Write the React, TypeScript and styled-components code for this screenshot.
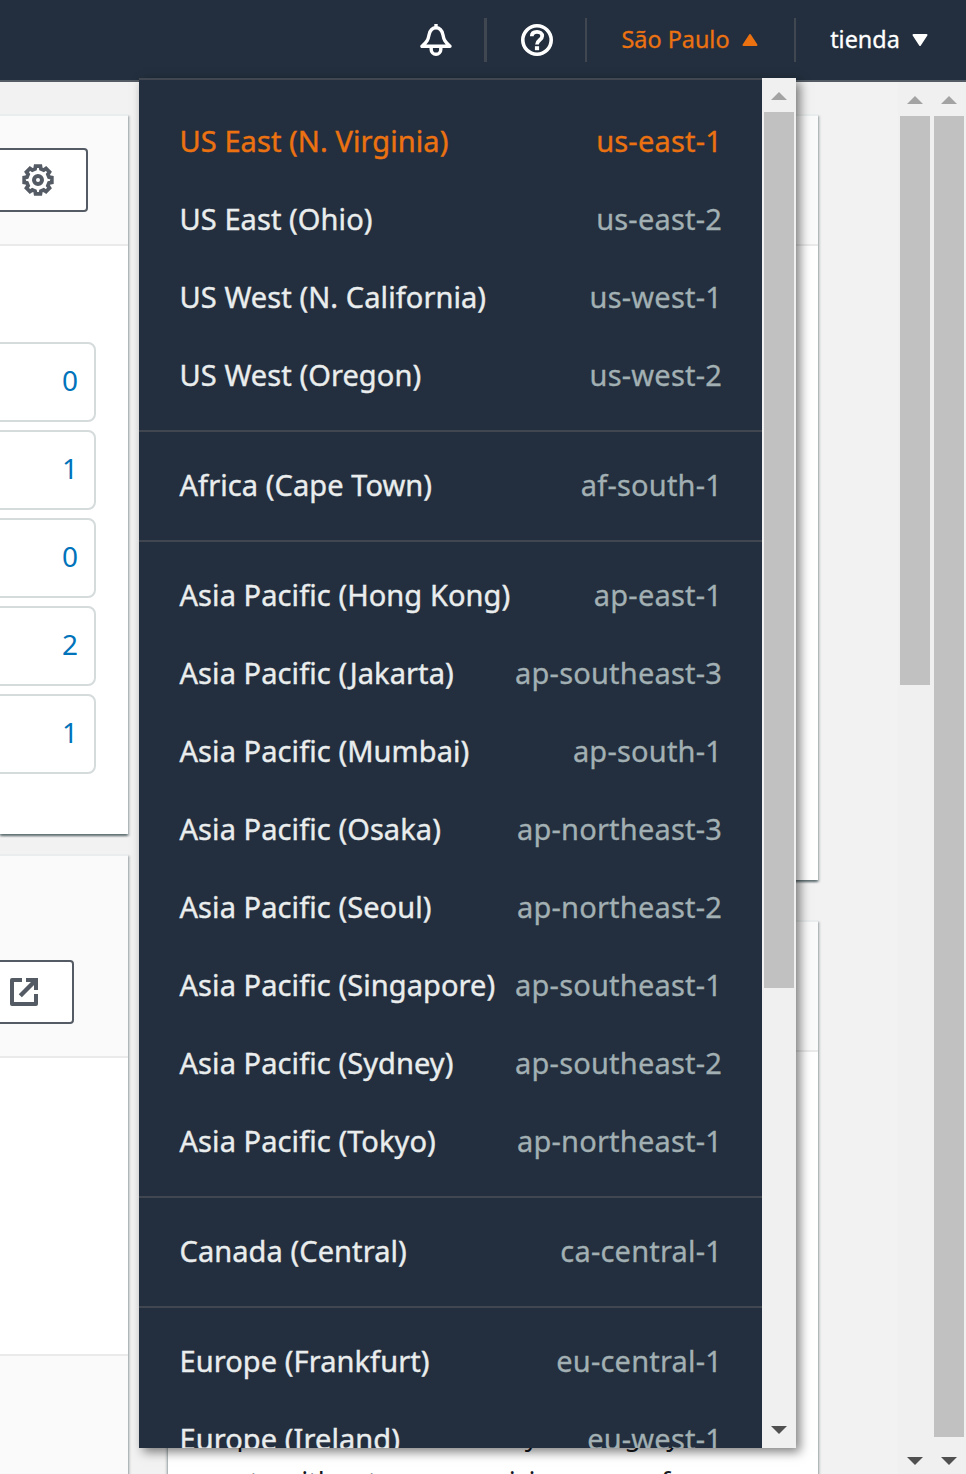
import React from 'react';
import styled, { createGlobalStyle } from 'styled-components';

const GlobalStyle = createGlobalStyle`
  *, *::before, *::after { box-sizing: border-box; }
  body { margin: 0; background: #f2f3f3; font-family: 'Noto Sans', sans-serif; }
  svg { display: block; flex: none; }
`;

const Page = styled.div`
  position: relative;
  display: flex;
  flex-direction: column;
  width: 966px;
  height: 1474px;
  overflow: hidden;
  background: #f2f2f2;
`;

const TopNav = styled.header`
  display: flex;
  flex: none;
  align-items: flex-start;
  justify-content: flex-end;
  height: 82px;
  padding-top: 18px;
  background: #232f3e;
  border-bottom: 2px solid #545b64;
  color: #fff;
`;

const NavItem = styled.div<{ $width: number; $active?: boolean; $padLeft?: number; $padRight?: number }>`
  display: flex;
  align-items: center;
  justify-content: center;
  gap: 12px;
  width: ${(p) => p.$width}px;
  height: 44px;
  padding: 0 ${(p) => p.$padRight ?? 0}px 0 ${(p) => p.$padLeft ?? 0}px;
  font-size: 23.4px;
  line-height: 42px;
  white-space: nowrap;
  color: ${(p) => (p.$active ? '#ec7211' : '#fff')};
  -webkit-text-stroke: 0.3px currentColor;
`;

const NavLabel = styled.span`
  height: 44px;
`;

const NavDivider = styled.div<{ $thick?: boolean }>`
  width: ${(p) => (p.$thick ? 3 : 2)}px;
  height: 44px;
  background: #414750;
`;

const Body = styled.main`
  display: flex;
  flex: 1;
  min-height: 0;
`;

const Column = styled.section<{ $width: number; $gap: number }>`
  display: flex;
  flex: none;
  flex-direction: column;
  gap: ${(p) => p.$gap}px;
  width: ${(p) => p.$width}px;
  margin-right: 40px;
  padding-top: 32px;
`;

const Card = styled.article<{ $height: number }>`
  display: flex;
  flex: none;
  flex-direction: column;
  height: ${(p) => p.$height}px;
  background: #fff;
  border-top: 2px solid #eaeded;
  box-shadow: 0 2px 2px rgba(0, 28, 36, 0.45), 2px 2px 2px rgba(0, 28, 36, 0.15),
    -2px 2px 2px rgba(0, 28, 36, 0.15);
`;

const CardHeader = styled.div<{ $height: number; $inset?: number }>`
  display: flex;
  flex: none;
  align-items: flex-end;
  justify-content: flex-end;
  height: ${(p) => p.$height}px;
  padding: 0 ${(p) => p.$inset ?? 0}px 32px 0;
  background: #fafafa;
  border-bottom: 2px solid #eaeaea;
`;

const CardFooter = styled.div`
  flex: 1;
  margin-top: 296px;
  background: #fafafa;
  border-top: 2px solid #eaeaea;
`;

const IconButton = styled.button<{ $inset: number }>`
  display: flex;
  flex: none;
  align-items: center;
  justify-content: flex-end;
  width: 120px;
  height: 64px;
  margin: 0;
  padding: 0 ${(p) => p.$inset}px 0 0;
  background: #fff;
  border: 2px solid #545b64;
  border-radius: 4px;
  color: #545b64;
`;

const CountList = styled.div`
  display: flex;
  flex-direction: column;
  gap: 8px;
  margin-left: -40px;
  padding: 96px 32px 0 0;
`;

const CountBox = styled.div`
  height: 80px;
  padding-right: 16px;
  border: 2px solid #d5dbdb;
  border-radius: 8px;
  color: #0073bb;
  font-size: 28px;
  line-height: 72px;
  text-align: right;
`;

const Copy = styled.p`
  margin: 359px 0 0;
  padding-left: 39px;
  color: #16191f;
  font-size: 27px;
  line-height: 47px;
  word-spacing: 1px;
  white-space: nowrap;
`;

const Scrollbars = styled.div`
  display: flex;
  flex: none;
  margin-left: auto;
`;

const Track = styled.div<{ $end?: number }>`
  display: flex;
  flex: none;
  flex-direction: column;
  align-items: center;
  width: 34px;
  padding: 14px 0 ${(p) => p.$end ?? 9}px;
  background: #f0f0f0;
`;

const Thumb = styled.div<{ $height: number }>`
  width: 30px;
  height: ${(p) => p.$height}px;
  margin: 12px 0 auto;
  background: #c1c1c1;
`;

const Arrow = styled.div<{ $down?: boolean }>`
  width: 16px;
  height: 8px;
  background: ${(p) => (p.$down ? '#505050' : '#a3a3a3')};
  clip-path: ${(p) => (p.$down ? 'polygon(0 0, 100% 0, 50% 100%)' : 'polygon(50% 0, 100% 100%, 0 100%)')};
`;

const Dropdown = styled.div`
  position: absolute;
  top: 78px;
  left: 139px;
  display: flex;
  width: 657px;
  height: 1370px;
  box-shadow: 4px 4px 10px rgba(0, 0, 0, 0.5);
`;

const RegionList = styled.div`
  width: 623px;
  overflow: hidden;
  background: #232f3e;
  border-top: 2px solid #414750;
`;

const RegionGroup = styled.div`
  padding: 15px 40px 15px 40.5px;
  border-bottom: 2px solid #414750;

  &:first-child { padding-top: 23px; }
`;

const RegionRow = styled.div<{ $active?: boolean }>`
  display: flex;
  justify-content: space-between;
  height: 78px;
  font-size: 29px;
  line-height: 76px;
  white-space: nowrap;
  color: ${(p) => (p.$active ? '#ec7211' : '#eaeded')};
`;

const RegionName = styled.span`
  letter-spacing: 0.08px;
  -webkit-text-stroke: 0.4px currentColor;
`;

const RegionCode = styled.span<{ $active?: boolean }>`
  letter-spacing: 0.2px;
  -webkit-text-stroke: 0.3px currentColor;
  color: ${(p) => (p.$active ? 'inherit' : '#a2b0b3')};
`;

type Region = [name: string, code: string];

const groups: Region[][] = [
  [
    ['US East (N. Virginia)', 'us-east-1'],
    ['US East (Ohio)', 'us-east-2'],
    ['US West (N. California)', 'us-west-1'],
    ['US West (Oregon)', 'us-west-2'],
  ],
  [['Africa (Cape Town)', 'af-south-1']],
  [
    ['Asia Pacific (Hong Kong)', 'ap-east-1'],
    ['Asia Pacific (Jakarta)', 'ap-southeast-3'],
    ['Asia Pacific (Mumbai)', 'ap-south-1'],
    ['Asia Pacific (Osaka)', 'ap-northeast-3'],
    ['Asia Pacific (Seoul)', 'ap-northeast-2'],
    ['Asia Pacific (Singapore)', 'ap-southeast-1'],
    ['Asia Pacific (Sydney)', 'ap-southeast-2'],
    ['Asia Pacific (Tokyo)', 'ap-northeast-1'],
  ],
  [['Canada (Central)', 'ca-central-1']],
  [
    ['Europe (Frankfurt)', 'eu-central-1'],
    ['Europe (Ireland)', 'eu-west-1'],
  ],
];

const counts = [0, 1, 0, 2, 1];

const BellIcon = () => (
  <svg width="32" height="32" viewBox="0 0 32 32" fill="none" stroke="currentColor" strokeWidth="3.4">
    <path d="M16 0v4" />
    <path d="M2 22.300h28C24.800 18 23.800 15.500 23 11C22 6.300 19.600 3.800 16 3.800S10 6.300 9 11C8.200 15.500 7.200 18 2 22.300z" strokeLinejoin="round" />
    <path d="M11.200 23v2.400a4.800 4.800 0 0 0 9.600 0V23" />
  </svg>
);

const HelpIcon = () => (
  <svg width="32" height="32" viewBox="0 0 32 32" fill="none" stroke="currentColor">
    <circle cx="16" cy="16" r="14.200" strokeWidth="3.600" />
    <path d="M10.800 12.300c0-3 2.200-4.500 5.200-4.500s5.200 1.600 5.200 4.300c0 4.100-5.200 3.900-5.200 8.400" strokeWidth="3.800" />
    <path d="M16 22.200v4" strokeWidth="4.200" />
  </svg>
);

const gearPath = Array.from({ length: 8 }, (_, i) =>
  [[-15, 11.4], [-10, 14], [10, 14], [15, 11.4]]
    .map(([offset, radius]) => {
      const a = ((i * 45 + offset) * Math.PI) / 180;
      return `${(16 + radius * Math.sin(a)).toFixed(2)} ${(16 - radius * Math.cos(a)).toFixed(2)}`;
    })
    .join('L'),
).join('L');

const GearIcon = () => (
  <svg width="32" height="32" viewBox="0 0 32 32" fill="none" stroke="currentColor">
    <path d={`M${gearPath}z`} strokeWidth="3.800" strokeLinejoin="miter" />
    <circle cx="16" cy="16" r="4" strokeWidth="4" />
  </svg>
);

const ExternalIcon = () => (
  <svg width="28" height="28" viewBox="0 0 28 28" fill="none" stroke="currentColor" strokeWidth="4">
    <path d="M12 2H2v24h24V16" strokeLinejoin="round" />
    <path d="M16 2h10v10" />
    <path d="M25 3L10.300 17.700" strokeWidth="4.400" />
  </svg>
);

const Caret = ({ down }: { down?: boolean }) => (
  <svg width="16" height="14" viewBox="0 0 16 14" fill="currentColor" stroke="currentColor" strokeWidth="2" strokeLinejoin="round">
    <path d={down ? 'M1.500 2h13L8 12z' : 'M8 2L14.500 12h-13z'} />
  </svg>
);

export default function App() {
  return (
    <>
      <GlobalStyle />
      <Page>
        <TopNav>
          <NavItem $width={97}><BellIcon /></NavItem>
          <NavDivider $thick />
          <NavItem $width={98} $padLeft={2}><HelpIcon /></NavItem>
          <NavDivider />
          <NavItem $width={207} $padRight={2} $active><NavLabel>São Paulo</NavLabel><Caret /></NavItem>
          <NavDivider />
          <NavItem $width={170} $padRight={4}><NavLabel>tienda</NavLabel><Caret down /></NavItem>
        </TopNav>
        <Body>
          <Column $width={128} $gap={20}>
            <Card $height={720}>
              <CardHeader $height={130} $inset={40}>
                <IconButton $inset={32}><GearIcon /></IconButton>
              </CardHeader>
              <CountList>
                {counts.map((count, i) => <CountBox key={i}>{count}</CountBox>)}
              </CountList>
            </Card>
            <Card $height={660}>
              <CardHeader $height={202} $inset={54}>
                <IconButton $inset={34}><ExternalIcon /></IconButton>
              </CardHeader>
              <CardFooter />
            </Card>
          </Column>
          <Column $width={650} $gap={40}>
            <Card $height={766}>
              <CardHeader $height={130} />
            </Card>
            <Card $height={640}>
              <CardHeader $height={130} />
              <Copy>
                Top workloads in use only some grey<br />
                costs without compromising on perf
              </Copy>
            </Card>
          </Column>
          <Scrollbars>
            <Track><Arrow /><Thumb $height={569} /><Arrow $down /></Track>
            <Track><Arrow /><Thumb $height={1321} /><Arrow $down /></Track>
          </Scrollbars>
        </Body>
        <Dropdown>
          <RegionList>
            {groups.map((regions, g) => (
              <RegionGroup key={g}>
                {regions.map(([name, code]) => {
                  const active = code === 'us-east-1';
                  return (
                    <RegionRow key={code} $active={active}>
                      <RegionName>{name}</RegionName>
                      <RegionCode $active={active}>{code}</RegionCode>
                    </RegionRow>
                  );
                })}
              </RegionGroup>
            ))}
          </RegionList>
          <Track $end={14}><Arrow /><Thumb $height={876} /><Arrow $down /></Track>
        </Dropdown>
      </Page>
    </>
  );
}
